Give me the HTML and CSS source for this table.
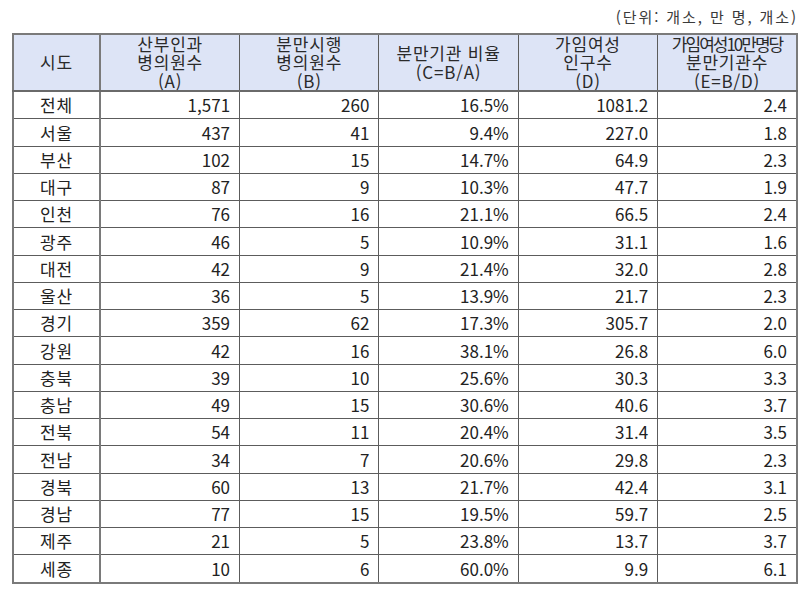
FILE: index.html
```html
<!DOCTYPE html>
<html lang="ko">
<head>
<meta charset="utf-8">
<title>시도별 분만기관 현황</title>
<link rel="stylesheet" href="styles.css">
</head>
<body>
<div class="page">
  <div class="unit">(단위: 개소, 만 명, 개소)</div>
  <table class="stats">
    <colgroup>
      <col class="c-region">
      <col class="c-num">
      <col class="c-num">
      <col class="c-num">
      <col class="c-num">
      <col class="c-num">
    </colgroup>
    <thead>
      <tr>
        <th class="first">시도</th>
        <th>산부인과<br>병의원수<br>(A)</th>
        <th>분만시행<br>병의원수<br>(B)</th>
        <th>분만기관 비율<br>(C=B/A)</th>
        <th>가임여성<br>인구수<br>(D)</th>
        <th><span class="tight">가임여성10만명당</span><br>분만기관수<br>(E=B/D)</th>
      </tr>
    </thead>
    <tbody>
      <tr><td class="first">전체</td><td>1,571</td><td>260</td><td>16.5%</td><td>1081.2</td><td>2.4</td></tr>
      <tr><td class="first">서울</td><td>437</td><td>41</td><td>9.4%</td><td>227.0</td><td>1.8</td></tr>
      <tr><td class="first">부산</td><td>102</td><td>15</td><td>14.7%</td><td>64.9</td><td>2.3</td></tr>
      <tr><td class="first">대구</td><td>87</td><td>9</td><td>10.3%</td><td>47.7</td><td>1.9</td></tr>
      <tr><td class="first">인천</td><td>76</td><td>16</td><td>21.1%</td><td>66.5</td><td>2.4</td></tr>
      <tr><td class="first">광주</td><td>46</td><td>5</td><td>10.9%</td><td>31.1</td><td>1.6</td></tr>
      <tr><td class="first">대전</td><td>42</td><td>9</td><td>21.4%</td><td>32.0</td><td>2.8</td></tr>
      <tr><td class="first">울산</td><td>36</td><td>5</td><td>13.9%</td><td>21.7</td><td>2.3</td></tr>
      <tr><td class="first">경기</td><td>359</td><td>62</td><td>17.3%</td><td>305.7</td><td>2.0</td></tr>
      <tr><td class="first">강원</td><td>42</td><td>16</td><td>38.1%</td><td>26.8</td><td>6.0</td></tr>
      <tr><td class="first">충북</td><td>39</td><td>10</td><td>25.6%</td><td>30.3</td><td>3.3</td></tr>
      <tr><td class="first">충남</td><td>49</td><td>15</td><td>30.6%</td><td>40.6</td><td>3.7</td></tr>
      <tr><td class="first">전북</td><td>54</td><td>11</td><td>20.4%</td><td>31.4</td><td>3.5</td></tr>
      <tr><td class="first">전남</td><td>34</td><td>7</td><td>20.6%</td><td>29.8</td><td>2.3</td></tr>
      <tr><td class="first">경북</td><td>60</td><td>13</td><td>21.7%</td><td>42.4</td><td>3.1</td></tr>
      <tr><td class="first">경남</td><td>77</td><td>15</td><td>19.5%</td><td>59.7</td><td>2.5</td></tr>
      <tr><td class="first">제주</td><td>21</td><td>5</td><td>23.8%</td><td>13.7</td><td>3.7</td></tr>
      <tr><td class="first">세종</td><td>10</td><td>6</td><td>60.0%</td><td>9.9</td><td>6.1</td></tr>
    </tbody>
  </table>
</div>
</body>
</html>
```

FILE: styles.css
```css
html, body {
  margin: 0;
  padding: 0;
  background: #ffffff;
}

body {
  font-family: "Noto Sans CJK KR", "Noto Sans", sans-serif;
  color: #222222;
}

.page {
  padding: 0 2px 0 12px;
}

.unit {
  height: 33px;
  display: flex;
  align-items: center;
  justify-content: flex-end;
  font-size: 15px;
  letter-spacing: 1.9px;
  color: #3a3a3a;
}

.stats {
  width: 786px;
  border-collapse: collapse;
  table-layout: fixed;
  border: 2px solid #7a7a7a;
}

.c-region {
  width: 87px;
}

.c-num {
  width: 139px;
}

.stats th,
.stats td {
  border: 1px solid #5c5c5c;
  padding: 0 9px 0 0;
  font-size: 17px;
  font-weight: normal;
}

.stats th {
  background: #dde4f6;
  color: #2a2a2a;
  height: 52px;
  line-height: 18.4px;
  text-align: center;
  padding: 0;
  letter-spacing: 0.8px;
  border-bottom: 2px solid #6a6a6a;
}

.stats th .tight {
  letter-spacing: -2px;
}

.stats td {
  height: 26.25px;
  line-height: 18px;
  text-align: right;
}

.stats .first {
  text-align: center;
  padding: 0;
  letter-spacing: 1px;
  border-right: 2px solid #7a7a7a;
}
```
